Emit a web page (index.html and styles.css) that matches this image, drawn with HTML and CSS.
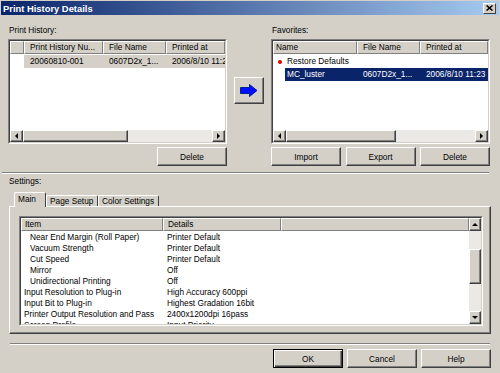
FILE: index.html
```html
<!DOCTYPE html>
<html>

<head>
    <meta charset="utf-8" />
    <title>Print History Details</title>
    <link rel="stylesheet" href="styles.css">
</head>

<body>
    <div class="window">
        <div class="titlebar">
            <span class="title">Print History Details</span>
            <span class="close">
                <svg width="7" height="6" viewBox="0 0 7 6">
                    <path d="M0.5 0.5 L6.5 5.5 M6.5 0.5 L0.5 5.5" stroke="#000" stroke-width="1.6" />
                </svg>
            </span>
        </div>

        <div class="top">
            <div class="pane">
                <div class="label">Print History:</div>
                <div class="listbox">
                    <div class="listbox-inner">
                        <div class="header">
                            <div class="hcell gut-l"></div>
                            <div class="hcell col-num">Print History Nu...</div>
                            <div class="hcell col-file">File Name</div>
                            <div class="hcell col-rest">Printed at</div>
                        </div>
                        <div class="rows">
                            <div class="row">
                                <div class="gut-l"></div>
                                <div class="cells sel-gray">
                                    <div class="cell col-num-d">20060810-001</div>
                                    <div class="cell col-file">0607D2x_1...</div>
                                    <div class="cell col-rest">2006/8/10 11:23</div>
                                </div>
                            </div>
                        </div>
                        <div class="hscroll">
                            <div class="sbtn"><span class="tri-left"></span></div>
                            <div class="track">
                                <div class="thumb thumb-l"></div>
                            </div>
                            <div class="sbtn"><span class="tri-right"></span></div>
                        </div>
                    </div>
                </div>
                <div class="btnrow right">
                    <button class="btn">Delete</button>
                </div>
            </div>

            <div class="mid">
                <button class="btn arrow">
                    <svg width="18" height="13" viewBox="0 0 18 13">
                        <polygon points="0.5,3.5 9.5,3.5 9.5,0.5 17,6.5 9.5,12.5 9.5,9.5 0.5,9.5" fill="#0010ff" stroke="#00209a" stroke-width="1" />
                    </svg>
                </button>
            </div>

            <div class="pane">
                <div class="label">Favorites:</div>
                <div class="listbox">
                    <div class="listbox-inner">
                        <div class="header">
                            <div class="hcell col-name">Name</div>
                            <div class="hcell col-file">File Name</div>
                            <div class="hcell col-rest">Printed at</div>
                        </div>
                        <div class="rows">
                            <div class="row">
                                <div class="gut-r"><span class="bullet"></span></div>
                                <div class="cells">
                                    <div class="cell col-name-d">Restore Defaults</div>
                                </div>
                            </div>
                            <div class="row">
                                <div class="gut-r"></div>
                                <div class="cells sel-blue">
                                    <div class="cell col-name-d">MC_luster</div>
                                    <div class="cell col-file">0607D2x_1...</div>
                                    <div class="cell col-rest">2006/8/10 11:23</div>
                                </div>
                            </div>
                        </div>
                        <div class="hscroll">
                            <div class="sbtn"><span class="tri-left"></span></div>
                            <div class="track">
                                <div class="thumb thumb-r"></div>
                            </div>
                            <div class="sbtn"><span class="tri-right"></span></div>
                        </div>
                    </div>
                </div>
                <div class="btnrow spread">
                    <button class="btn">Import</button>
                    <button class="btn">Export</button>
                    <button class="btn">Delete</button>
                </div>
            </div>
        </div>

        <div class="sep sep-top"></div>

        <div class="label settings-label">Settings:</div>

        <div class="tabs">
            <div class="tab active">Main</div>
            <div class="tab">Page Setup</div>
            <div class="tab">Color Settings</div>
        </div>

        <div class="panel">
            <div class="listbox settings">
                <div class="listbox-inner srow-wrap">
                    <div class="smain">
                        <div class="header">
                            <div class="hcell col-item">Item</div>
                            <div class="hcell col-detail">Details</div>
                            <div class="hcell col-rest"></div>
                        </div>
                        <div class="srows">
                            <div class="srow child"><span class="sitem">Near End Margin (Roll Paper)</span><span class="sdetail">Printer Default</span></div>
                            <div class="srow child"><span class="sitem">Vacuum Strength</span><span class="sdetail">Printer Default</span></div>
                            <div class="srow child"><span class="sitem">Cut Speed</span><span class="sdetail">Printer Default</span></div>
                            <div class="srow child"><span class="sitem">Mirror</span><span class="sdetail">Off</span></div>
                            <div class="srow child"><span class="sitem">Unidirectional Printing</span><span class="sdetail">Off</span></div>
                            <div class="srow"><span class="sitem">Input Resolution to Plug-in</span><span class="sdetail">High Accuracy 600ppi</span></div>
                            <div class="srow"><span class="sitem">Input Bit to Plug-in</span><span class="sdetail">Highest Gradation 16bit</span></div>
                            <div class="srow"><span class="sitem">Printer Output Resolution and Pass</span><span class="sdetail">2400x1200dpi 16pass</span></div>
                            <div class="srow"><span class="sitem">Screen Profile</span><span class="sdetail">Input Priority</span></div>
                        </div>
                    </div>
                    <div class="vscroll">
                        <div class="sbtn vbtn"><span class="tri-up"></span></div>
                        <div class="vtrack">
                            <div class="vthumb"></div>
                        </div>
                        <div class="sbtn vbtn"><span class="tri-down"></span></div>
                    </div>
                </div>
            </div>
        </div>

        <div class="sep sep-bottom"></div>

        <div class="footer">
            <button class="btn default">OK</button>
            <button class="btn">Cancel</button>
            <button class="btn">Help</button>
        </div>
    </div>
</body>

</html>
```

FILE: styles.css
```css
body {
    margin: 0;
    background: #d4d0c8;
    font-family: "Liberation Sans", Arial, sans-serif;
    font-size: 8.3px;
    color: #000;
}

.window {
    width: 500px;
    height: 373px;
    overflow: hidden;
}

/* title bar */
.titlebar {
    height: 14px;
    margin: 1px 1px 0 1px;
    padding: 0 3px 0 2px;
    display: flex;
    align-items: center;
    justify-content: space-between;
    background: linear-gradient(to right, #0a246a, #a6caf0);
}

.title {
    color: #fff;
    font-weight: bold;
    font-size: 9.4px;
}

.close {
    box-sizing: border-box;
    width: 13px;
    height: 11px;
    display: flex;
    align-items: center;
    justify-content: center;
    background: #d4d0c8;
    border: 1px solid;
    border-color: #fff #404040 #404040 #fff;
}

/* top area */
.top {
    display: flex;
    padding: 9px 10px 0 8px;
}

.pane {
    width: 219px;
    display: flex;
    flex-direction: column;
}

.mid {
    width: 44px;
    display: flex;
    align-items: center;
    justify-content: center;
    padding-top: 13px;
    padding-bottom: 22px;
}

.label {
    height: 12px;
    line-height: 12px;
    margin-bottom: 3px;
    padding-left: 1px;
}

/* list boxes */
.listbox {
    box-sizing: border-box;
    height: 105px;
    border: 1px solid;
    border-color: #808080 #fff #fff #808080;
    background: #fff;
}

.listbox-inner {
    box-sizing: border-box;
    height: 100%;
    display: flex;
    flex-direction: column;
    border: 1px solid;
    border-color: #404040 #d4d0c8 #d4d0c8 #404040;
    overflow: hidden;
}

.header {
    display: flex;
    height: 13px;
    flex-shrink: 0;
}

.hcell {
    box-sizing: border-box;
    height: 13px;
    line-height: 11px;
    padding-left: 5px;
    background: #d4d0c8;
    border: 1px solid;
    border-color: #fff #808080 #808080 #fff;
    white-space: nowrap;
    overflow: hidden;
}

.rows {
    flex: 1;
    overflow: hidden;
    padding-top: 1px;
}

.row {
    display: flex;
    height: 13px;
    line-height: 13px;
}

.cells {
    flex: 1;
    display: flex;
    min-width: 0;
}

.cell {
    box-sizing: border-box;
    padding-left: 6px;
    white-space: nowrap;
    overflow: hidden;
}

.sel-gray {
    background: #d4d0c8;
}

.sel-blue {
    background: #0a246a;
    color: #fff;
}

.gut-l {
    width: 14px;
    flex-shrink: 0;
}

.gut-r {
    width: 12px;
    flex-shrink: 0;
    display: flex;
    align-items: center;
    justify-content: center;
}

.hcell.gut-l {
    padding: 0;
}

.col-num {
    width: 79px;
}

.col-num-d {
    width: 79px;
}

.col-file {
    width: 63px;
    flex-shrink: 0;
}

.col-rest {
    flex: 1;
    min-width: 0;
}

.col-name {
    width: 84px;
    padding-left: 2px;
}

.col-name-d {
    width: 72px;
    padding-left: 2px;
}

.bullet {
    width: 4px;
    height: 4px;
    border-radius: 50%;
    background: #e00000;
    margin-left: 2px;
}

/* scroll bars */
.hscroll {
    display: flex;
    height: 12px;
    flex-shrink: 0;
}

.sbtn {
    box-sizing: border-box;
    width: 13px;
    height: 12px;
    flex-shrink: 0;
    display: flex;
    align-items: center;
    justify-content: center;
    background: #d4d0c8;
    border: 1px solid;
    border-color: #fff #404040 #404040 #fff;
    box-shadow: inset -1px -1px #808080;
}

.track {
    flex: 1;
    background: #ebe9e5;
    display: flex;
}

.thumb {
    box-sizing: border-box;
    height: 12px;
    background: #d4d0c8;
    border: 1px solid;
    border-color: #fff #404040 #404040 #fff;
    box-shadow: inset -1px -1px #808080;
}

.thumb-l {
    width: 105px;
}

.thumb-r {
    width: 110px;
}

.tri-left,
.tri-right,
.tri-up,
.tri-down {
    width: 0;
    height: 0;
    border: 3px solid transparent;
}

.tri-left {
    border-right-color: #000;
    border-left-width: 0;
}

.tri-right {
    border-left-color: #000;
    border-right-width: 0;
}

.tri-up {
    border-bottom-color: #000;
    border-top-width: 0;
    border-left-width: 3.5px;
    border-right-width: 3.5px;
}

.tri-down {
    border-top-color: #000;
    border-bottom-width: 0;
    border-left-width: 3.5px;
    border-right-width: 3.5px;
}

/* buttons */
.btn {
    box-sizing: border-box;
    width: 70px;
    height: 19px;
    padding: 0;
    font: inherit;
    color: #000;
    background: #d4d0c8;
    border: 1px solid;
    border-color: #fff #404040 #404040 #fff;
    box-shadow: inset -1px -1px #808080;
}

.btn.default {
    border-color: #000;
    box-shadow: inset 1px 1px #fff, inset -1px -1px #404040, inset -2px -2px #808080;
}

.btn.arrow {
    width: 30px;
    height: 27px;
    display: flex;
    align-items: center;
    justify-content: center;
}

.btnrow {
    display: flex;
    margin-top: 3px;
}

.btnrow.right {
    justify-content: flex-end;
}

.btnrow.spread {
    justify-content: space-between;
}

/* separators */
.sep {
    height: 1px;
    border-top: 1px solid #808080;
    border-bottom: 1px solid #fff;
    height: 0;
}

.sep-top {
    margin: 6px 11px 0 2px;
}

.sep-bottom {
    margin: 9px 10px 0 10px;
}

.settings-label {
    margin: 1px 0 0 9px;
    padding: 0;
}

/* tabs */
.tabs {
    display: flex;
    align-items: flex-end;
    height: 14px;
    margin-top: 5px;
    padding-left: 14px;
}

.tab {
    box-sizing: border-box;
    height: 11px;
    line-height: 10px;
    padding: 0 3px 0 3px;
    border: 1px solid;
    border-bottom: none;
    border-color: #fff #404040 #404040 #fff;
    border-radius: 2px 2px 0 0;
    background: #d4d0c8;
    white-space: nowrap;
}

.tab.active {
    height: 15px;
    line-height: 12px;
    width: 32px;
    padding-left: 3px;
    margin-bottom: -1px;
    position: relative;
    z-index: 1;
}

.tab:nth-child(2) {
    width: 52px;
}

.tab:nth-child(3) {
    width: 61px;
}

.panel {
    box-sizing: border-box;
    height: 128px;
    margin: 0 9px 0 9px;
    padding: 9px 7px 5px 9px;
    border: 1px solid;
    border-color: #fff #404040 #404040 #fff;
    box-shadow: inset -1px -1px #808080;
}

/* settings list */
.listbox.settings {
    height: 110px;
}

.srow-wrap {
    flex-direction: row;
}

.smain {
    flex: 1;
    display: flex;
    flex-direction: column;
    min-width: 0;
}

.col-item {
    width: 142px;
    padding-left: 3px;
}

.col-detail {
    width: 118px;
    padding-left: 4px;
}

.srows {
    flex: 1;
    overflow: hidden;
    padding-top: 1px;
}

.srow {
    display: flex;
    height: 11px;
    line-height: 11px;
    white-space: nowrap;
}

.sitem {
    box-sizing: border-box;
    width: 142px;
    padding-left: 3px;
}

.srow.child .sitem {
    padding-left: 9px;
}

.sdetail {
    padding-left: 4px;
}

.vscroll {
    width: 12px;
    display: flex;
    flex-direction: column;
    flex-shrink: 0;
}

.vbtn {
    width: 12px;
    height: 13px;
}

.vtrack {
    flex: 1;
    background: #ebe9e5;
}

.vthumb {
    box-sizing: border-box;
    width: 12px;
    height: 35px;
    margin-top: 18px;
    background: #d4d0c8;
    border: 1px solid;
    border-color: #fff #404040 #404040 #fff;
    box-shadow: inset -1px -1px #808080;
}

/* footer */
.footer {
    display: flex;
    justify-content: flex-end;
    gap: 4px;
    margin: 4px 9px 0 0;
}
```
